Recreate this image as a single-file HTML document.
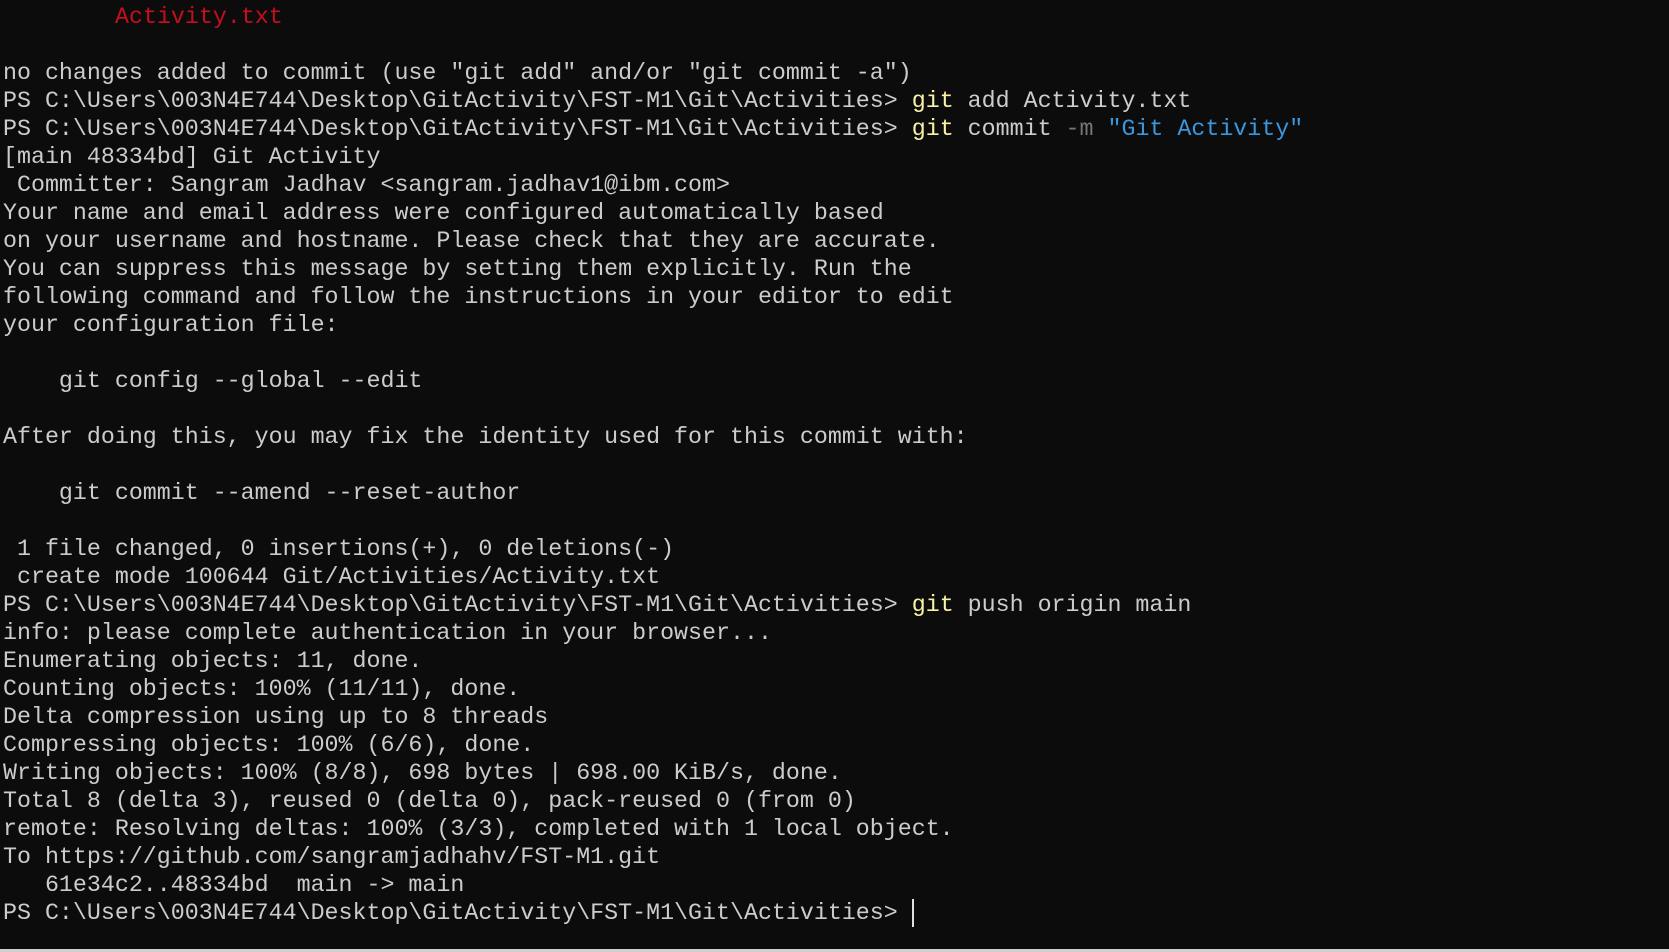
<!DOCTYPE html>
<html><head><meta charset="utf-8"><style>
html,body{margin:0;padding:0;background:#0c0c0c;width:1669px;height:952px;overflow:hidden}
pre{margin:0;position:absolute;left:3px;top:3px;font-family:"Liberation Mono",monospace;font-size:23.3px;line-height:28px;color:#cccccc;white-space:pre}
.r{color:#c50f1f}.y{color:#f9f1a5}.b{color:#3a96dd}.g{color:#767676}
.cur{position:absolute;left:912px;top:899px;width:2px;height:28px;background:#e0e0e0}
.bar{position:absolute;left:0;top:949px;width:1669px;height:3px;background:#cfcfcf}
</style></head><body>
<pre><span style="display:inline-block;width:112px"></span><span class="r">Activity.txt</span>

no changes added to commit (use "git add" and/or "git commit -a")
PS C:\Users\003N4E744\Desktop\GitActivity\FST-M1\Git\Activities&gt; <span class="y">git</span> add Activity.txt
PS C:\Users\003N4E744\Desktop\GitActivity\FST-M1\Git\Activities&gt; <span class="y">git</span> commit <span class="g">-m</span> <span class="b">"Git Activity"</span>
[main 48334bd] Git Activity
 Committer: Sangram Jadhav &lt;sangram.jadhav1@ibm.com&gt;
Your name and email address were configured automatically based
on your username and hostname. Please check that they are accurate.
You can suppress this message by setting them explicitly. Run the
following command and follow the instructions in your editor to edit
your configuration file:

    git config --global --edit

After doing this, you may fix the identity used for this commit with:

    git commit --amend --reset-author

 1 file changed, 0 insertions(+), 0 deletions(-)
 create mode 100644 Git/Activities/Activity.txt
PS C:\Users\003N4E744\Desktop\GitActivity\FST-M1\Git\Activities&gt; <span class="y">git</span> push origin main
info: please complete authentication in your browser...
Enumerating objects: 11, done.
Counting objects: 100% (11/11), done.
Delta compression using up to 8 threads
Compressing objects: 100% (6/6), done.
Writing objects: 100% (8/8), 698 bytes | 698.00 KiB/s, done.
Total 8 (delta 3), reused 0 (delta 0), pack-reused 0 (from 0)
remote: Resolving deltas: 100% (3/3), completed with 1 local object.
To https://github.com/sangramjadhahv/FST-M1.git
   61e34c2..48334bd  main -&gt; main
PS C:\Users\003N4E744\Desktop\GitActivity\FST-M1\Git\Activities&gt; </pre>
<div class="cur"></div>
<div class="bar"></div>
</body></html>
